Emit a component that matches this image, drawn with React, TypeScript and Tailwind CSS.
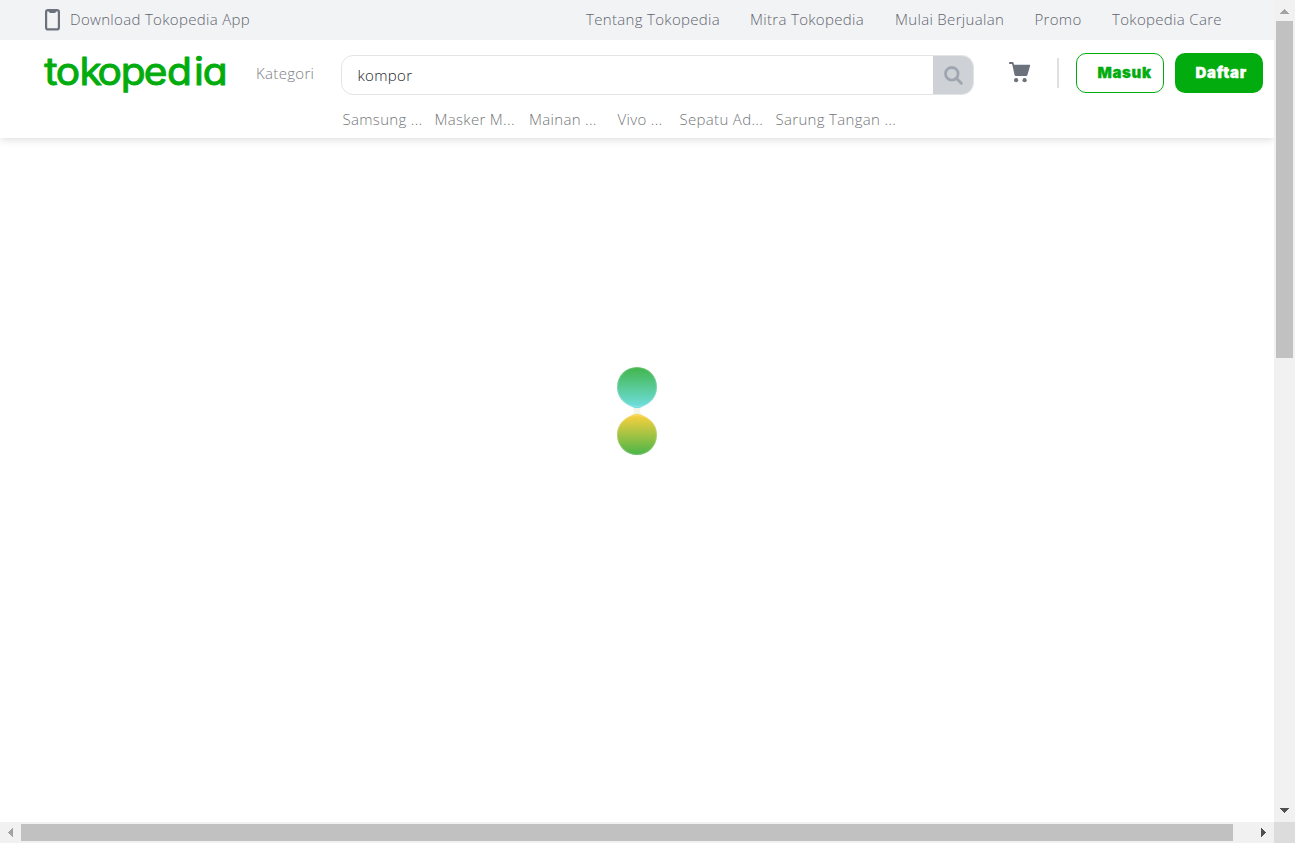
const topLinks = [
  { label: "Tentang Tokopedia", width: "w-[133.5px]" },
  { label: "Mitra Tokopedia", width: "w-[114.5px]" },
  { label: "Mulai Berjualan", width: "w-[109px]" },
  { label: "Promo", width: "w-[47px]" },
  { label: "Tokopedia Care", width: "w-[110px]" },
];

const suggestions = [
  { label: "Samsung ...", width: "w-[92px]" },
  { label: "Masker M...", width: "w-[94.5px]" },
  { label: "Mainan ...", width: "w-[88.5px]" },
  { label: "Vivo ...", width: "w-[62px]" },
  { label: "Sepatu Ad...", width: "w-[96px]" },
  { label: "Sarung Tangan ...", width: "w-[130px]" },
];

function Logo() {
  return (
    <svg className="h-[50px] w-[184px] shrink-0 overflow-visible" viewBox="44 52 184 50" aria-label="tokopedia">
      <text
        y="85.2"
        x="41.3 52.2 74.2 91.2 112.8 134.4 156 181.2 189.6"
        transform="scale(1.07 1)"
        fill="#03ac0e"
        stroke="#03ac0e"
        strokeWidth="1"
        strokeLinejoin="round"
        className="font-['Inter',sans-serif] text-[38px] font-normal tracking-normal [font-feature-settings:'cv11']"
      >
        tokopedia
      </text>
    </svg>
  );
}

function TopBar() {
  return (
    <div className="flex h-10 shrink-0 items-center justify-between bg-[#f2f3f5] pr-[52px] pl-[45px] text-[#5f656f]">
      <div className="flex items-center">
        <svg className="mr-[10px] h-[22px] w-[15px]" viewBox="0 0 15 22">
          <rect x="1.1" y="1.1" width="12.8" height="19.3" rx="2" fill="none" stroke="#6c727c" strokeWidth="2.2" />
          <path d="M3.5 1h8v1.4L10 4H5L3.5 2.4z" fill="#6c727c" />
        </svg>
        <span className="pb-0.5">Download Tokopedia App</span>
      </div>
      <nav className="flex gap-[30.5px] pb-0.5">
        {topLinks.map((l) => (
          <a key={l.label} className={"whitespace-nowrap " + l.width}>{l.label}</a>
        ))}
      </nav>
    </div>
  );
}

function Header() {
  return (
    <header className="h-[98px] shrink-0 bg-white shadow-[0_2px_8px_rgba(0,0,0,0.13)] [clip-path:inset(0_0_-14px_0)]">
      <div className="mt-3 flex h-[44px] pl-[44px]">
        <Logo />
        <a className="mt-[11px] ml-[28px] w-[85px] shrink-0 text-[#7c7e82]">Kategori</a>
        <div className="mt-[3px] flex h-10 w-[633px] shrink-0 overflow-hidden rounded-[12px] border border-[#e2e4e6]">
          <div className="flex flex-1 items-center pl-[15.5px] text-[#202329]">kompor</div>
          <div className="flex w-[40px] items-center justify-center bg-[#ced2d6]">
            <svg className="size-[20px]" viewBox="0 0 20 20" fill="none" stroke="#9fa6b0">
              <circle cx="8.8" cy="8.8" r="6.3" strokeWidth="2.8" />
              <path d="M13.3 13.3l5 5" strokeWidth="3" strokeLinecap="round" />
            </svg>
          </div>
        </div>
        <svg className="mt-[9px] ml-[35px] h-[22px] w-[22px] shrink-0" viewBox="0 0 22 22" fill="#6c727c">
          <path d="M.6 1h2.7c.7 0 1.2.5 1.4 1.2L5 3.8h15.5c.5 0 .8.5.6 1l-2.6 9c-.2.8-.8 1.3-1.5 1.3H7.3c-.9 0-1.6-.6-1.8-1.4L3.3 3.7 2.9 2.9H.6C.2 2.9 0 2.5 0 2s.2-1 .6-1z" />
          <circle cx="7.1" cy="19.2" r="2.1" />
          <circle cx="15.6" cy="19.2" r="2.1" />
        </svg>
        <div className="mt-[6px] ml-[26px] h-[30px] w-[2px] shrink-0 bg-[#dfe0e2]" />
        <button className="mt-px ml-[17px] flex h-10 w-[88px] shrink-0 items-center rounded-[10px] border border-[#03ac0e] pl-[20.5px] text-[#03ac0e]">
          <span className="font-['Inter',sans-serif] text-[15px] leading-5 font-black tracking-[0.65px] [-webkit-text-stroke:0.3px_#03ac0e]">Masuk</span>
        </button>
        <button className="mt-px ml-[11px] flex h-10 w-[88px] shrink-0 items-center rounded-[10px] bg-[#03ac0e] pl-[20.5px] text-white">
          <span className="font-['Inter',sans-serif] text-[15px] leading-5 font-black tracking-[0.75px] [-webkit-text-stroke:0.3px_white]">Daftar</span>
        </button>
      </div>
      <div className="mt-[13px] flex pl-[342.5px] text-[#747679]">
        {suggestions.map((s) => (
          <a key={s.label} className={"shrink-0 whitespace-nowrap " + s.width}>{s.label}</a>
        ))}
      </div>
    </header>
  );
}

function Loader() {
  return (
    <main className="flex flex-1 justify-center pt-[228px]">
      <svg className="h-[90px] w-[42px]" viewBox="0 0 42 90">
        <defs>
          <linearGradient id="top" x1="0" y1="0" x2="0" y2="1">
            <stop offset="0" stopColor="#41b549" />
            <stop offset="1" stopColor="#70dfe3" />
          </linearGradient>
          <linearGradient id="bottom" x1="0" y1="0" x2="0" y2="1">
            <stop offset="0" stopColor="#ffd13d" />
            <stop offset="1" stopColor="#48b549" />
          </linearGradient>
        </defs>
        <path d="M16 40Q20 45 16 49H26Q22 45 26 40z" fill="#e8efd9" opacity="0.6" />
        <path d="M21 1A20 20 0 0 1 41 21C41 31 35 37.5 25 41.2Q21 43 17 41.2C7 37.5 1 31 1 21A20 20 0 0 1 21 1z" fill="url(#top)" />
        <path d="M21 89A20 20 0 0 0 41 69C41 59 35 52.5 25 48.8Q21 47 17 48.8C7 52.5 1 59 1 69A20 20 0 0 0 21 89z" fill="url(#bottom)" />
        <circle cx="21" cy="21" r="19.5" fill="none" stroke="#ffffff" strokeOpacity="0.2" />
        <circle cx="21" cy="69" r="19.5" fill="none" stroke="#ffffff" strokeOpacity="0.2" />
      </svg>
    </main>
  );
}

function Arrow({ points, fill }: { points: string; fill: string }) {
  return (
    <svg className="size-[21px] shrink-0" viewBox="0 0 21 21" shapeRendering="crispEdges">
      <polygon points={points} fill={fill} />
    </svg>
  );
}

export default function App() {
  return (
    <div className="grid h-[843px] w-[1295px] grid-cols-[1274px_21px] grid-rows-[822px_21px] overflow-hidden bg-white font-['Open_Sans',sans-serif] text-[15px] leading-5 font-light tracking-[0.32px]">
      <div className="flex min-w-0 flex-col overflow-hidden">
        <TopBar />
        <Header />
        <Loader />
      </div>
      <div className="flex flex-col items-center bg-[#f1f1f1]">
        <Arrow points="6,14 15,14 10.5,9" fill="#a3a3a3" />
        <div className="h-[337px] w-[17px] bg-[#c1c1c1]" />
        <div className="flex-1" />
        <Arrow points="6,7 15,7 10.5,12" fill="#505050" />
      </div>
      <div className="flex items-center bg-[#f1f1f1]">
        <Arrow points="13,6 13,15 8,10.5" fill="#a3a3a3" />
        <div className="h-[17px] w-[1212px] bg-[#c1c1c1]" />
        <div className="flex-1" />
        <Arrow points="8,6 8,15 13,10.5" fill="#505050" />
      </div>
      <div className="bg-[#dcdcdc]" />
    </div>
  );
}
